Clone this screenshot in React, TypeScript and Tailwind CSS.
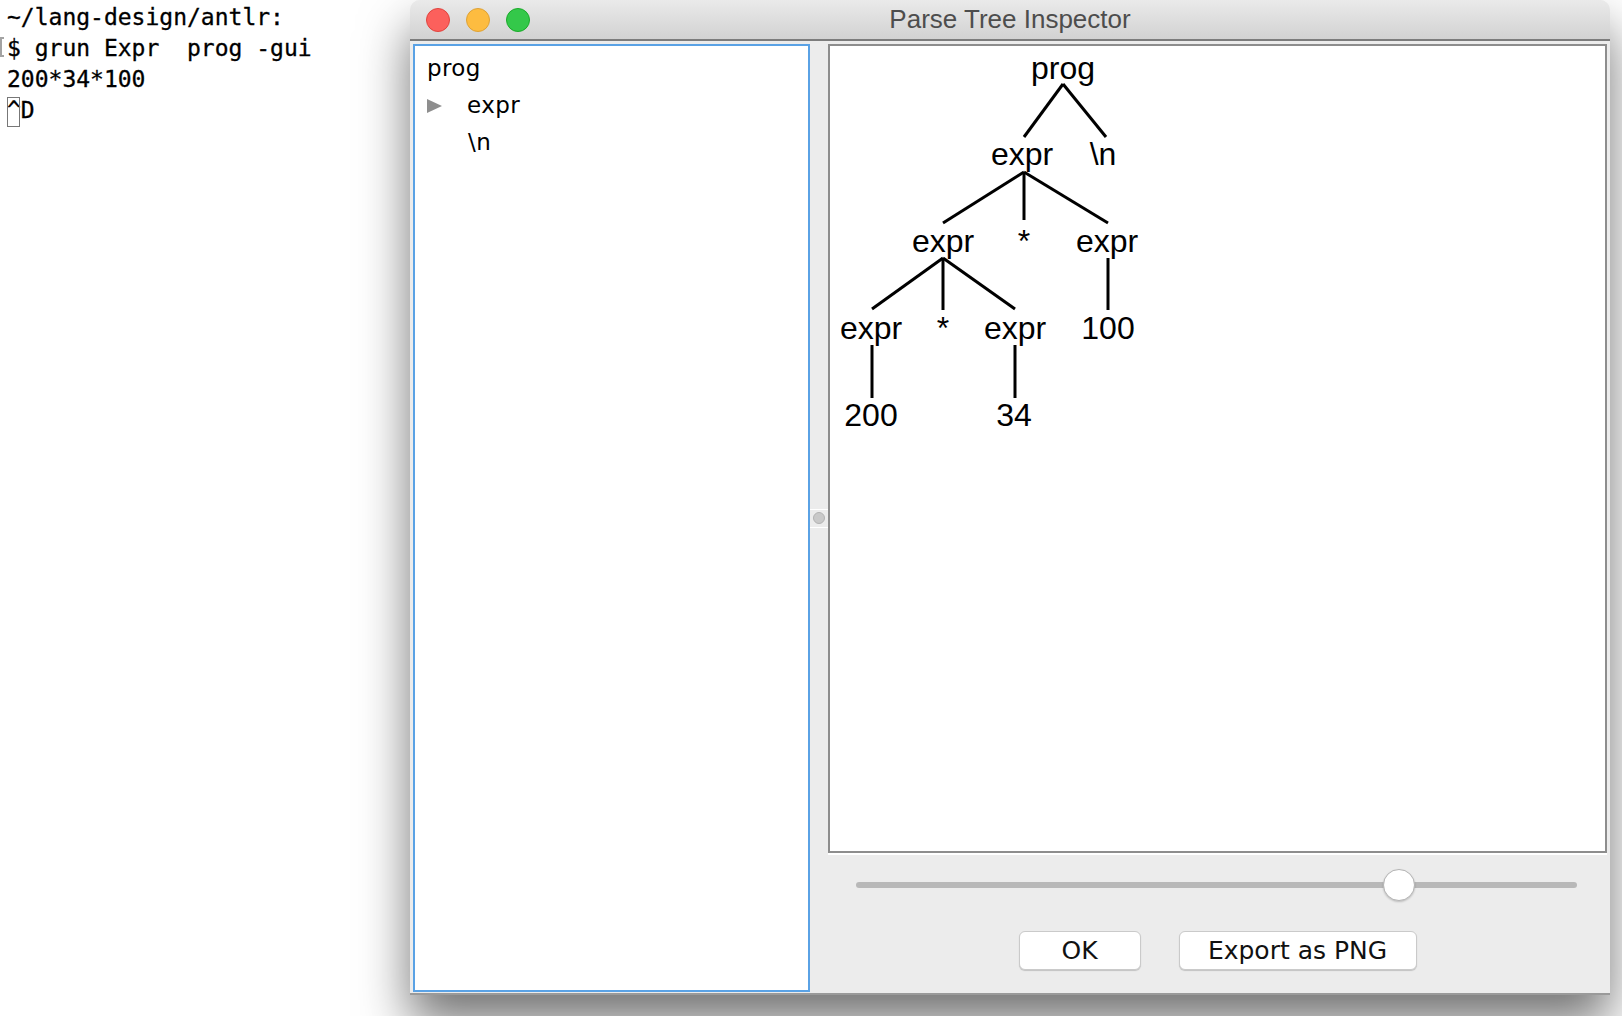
import React from 'react';

type Node = { label: string; x: number; y: number };
type Edge = [number, number, number, number];

const nodes: Node[] = [
  { label: 'prog', x: 1063, y: 79 },
  { label: 'expr', x: 1022, y: 165 },
  { label: '\\n', x: 1103, y: 165 },
  { label: 'expr', x: 943, y: 252 },
  { label: '*', x: 1024, y: 252 },
  { label: 'expr', x: 1107, y: 252 },
  { label: 'expr', x: 871, y: 339 },
  { label: '*', x: 943, y: 339 },
  { label: 'expr', x: 1015, y: 339 },
  { label: '100', x: 1108, y: 339 },
  { label: '200', x: 871, y: 426 },
  { label: '34', x: 1014, y: 426 },
];

const edges: Edge[] = [
  [1063, 84, 1024, 137],
  [1063, 84, 1106, 137],
  [1024, 172, 943, 223],
  [1024, 172, 1024, 220],
  [1024, 172, 1108, 223],
  [943, 258, 872, 309],
  [943, 258, 943, 310],
  [943, 258, 1015, 309],
  [1108, 258, 1108, 310],
  [872, 345, 872, 398],
  [1015, 345, 1015, 398],
];

function ParseTree() {
  // viewBox in page coordinates so the numbers above read straight off the screenshot
  return (
    <svg width={775} height={805} viewBox="830 46 775 805" className="block font-['Liberation_Sans',Arial,sans-serif] text-[32px]">
      {edges.map(([x1, y1, x2, y2], i) => (
        <line key={i} x1={x1} y1={y1} x2={x2} y2={y2} stroke="#000" strokeWidth={3} />
      ))}
      {nodes.map((n, i) => (
        <text key={i} x={n.x} y={n.y} textAnchor="middle" fill="#000">
          {n.label}
        </text>
      ))}
    </svg>
  );
}

function Terminal() {
  return (
    <div className="relative pt-[2px] pl-[7px] font-['DejaVu_Sans_Mono',monospace] text-[23px] leading-[31px] text-black whitespace-pre [-webkit-text-stroke:0.3px_#000]">
      <div>~/lang-design/antlr:</div>
      <div>$ grun Expr  prog -gui</div>
      <div>200*34*100</div>
      <div>^D</div>
      {/* prompt mark and cursor box */}
      <div className="absolute left-0 top-[37px] w-[4px] h-[20px] border-l-2 border-y-2 border-[#a3a3a3]"></div>
      <div className="absolute left-[7px] top-[97px] w-[13px] h-[30px] border-[1.5px] border-[#777]"></div>
    </div>
  );
}

function TrafficLight({ color, ring }: { color: string; ring: string }) {
  return <div className={`w-6 h-6 rounded-full border ${color} ${ring}`}></div>;
}

export default function App() {
  return (
    <div className="relative w-[1622px] h-[1016px] bg-white overflow-hidden">
      <Terminal />

      {/* Inspector window */}
      <div className="absolute left-[410px] top-0 w-[1200px] h-[995px] flex flex-col rounded-t-[10px] bg-[#ececec] border-b-2 border-[#9a9a9a] shadow-[0_28px_50px_rgba(0,0,0,0.55)]">
        {/* Title bar */}
        <div className="relative h-[41px] flex items-center rounded-t-[10px] bg-gradient-to-b from-[#eaeaea] to-[#d2d2d2] border-b-2 border-[#7c7c7c]">
          <div className="flex items-center gap-4 pl-4">
            <TrafficLight color="bg-[#fc605c]" ring="border-[#e0443e]" />
            <TrafficLight color="bg-[#fdbc40]" ring="border-[#dea236]" />
            <TrafficLight color="bg-[#34c84a]" ring="border-[#1aab29]" />
          </div>
          <div className="absolute inset-0 flex items-center justify-center font-['Liberation_Sans',Arial,sans-serif] text-[26px] text-[#4d4d4d]">
            Parse Tree Inspector
          </div>
        </div>

        {/* Body */}
        <div className="flex flex-1 pt-[3px] pl-[3px] pr-[3px] pb-[1px]">
          {/* Tree list */}
          <div className="w-[397px] border-2 border-[#5aa2e5] bg-white pt-[4px] pl-[12px] font-['DejaVu_Sans',sans-serif] text-[23px] leading-[37px] tracking-[0.4px] text-black">
            <div>prog</div>
            <div className="flex items-center">
              <svg width="15" height="14" viewBox="0 0 15 14" className="mr-[25px]">
                <polygon points="0,0 15,7 0,14" fill="#8e8e8e" />
              </svg>
              <span>expr</span>
            </div>
            <div className="pl-[41px]">\n</div>
          </div>

          {/* Split divider */}
          <div className="w-[18px] flex items-center justify-center">
            <div className="w-full h-[19px] flex items-center justify-center border-y border-white">
              <div className="w-3 h-3 rounded-full bg-[#c9c9c9] border border-[#b3b3b3]"></div>
            </div>
          </div>

          {/* Tree view + controls */}
          <div className="flex-1 flex flex-col">
            <div className="h-[809px] border-2 border-[#8d8d8d] bg-white shadow-[0_2px_0_#ffffff] overflow-hidden">
              <ParseTree />
            </div>

            <div className="mt-[16px] h-8 pl-[28px] pr-[30px] flex items-center">
              <div className="relative w-full h-[6px] rounded-full bg-[#b8b8b8]">
                <div className="absolute left-[527px] top-[-13px] w-8 h-8 rounded-full bg-white border border-[#b4b4b4] shadow-[0_1px_2px_rgba(0,0,0,0.2)]"></div>
              </div>
            </div>

            <div className="mt-[30px] flex justify-center gap-[38px] font-['DejaVu_Sans',sans-serif] text-[25px] text-[#111]">
              <button className="w-[122px] h-[39px] rounded-[6px] bg-white border border-[#cacaca] shadow-[0_1px_1px_rgba(0,0,0,0.18)]">
                OK
              </button>
              <button className="w-[238px] h-[39px] rounded-[6px] bg-white border border-[#cacaca] shadow-[0_1px_1px_rgba(0,0,0,0.18)]">
                Export as PNG
              </button>
            </div>
          </div>
        </div>
      </div>
    </div>
  );
}
